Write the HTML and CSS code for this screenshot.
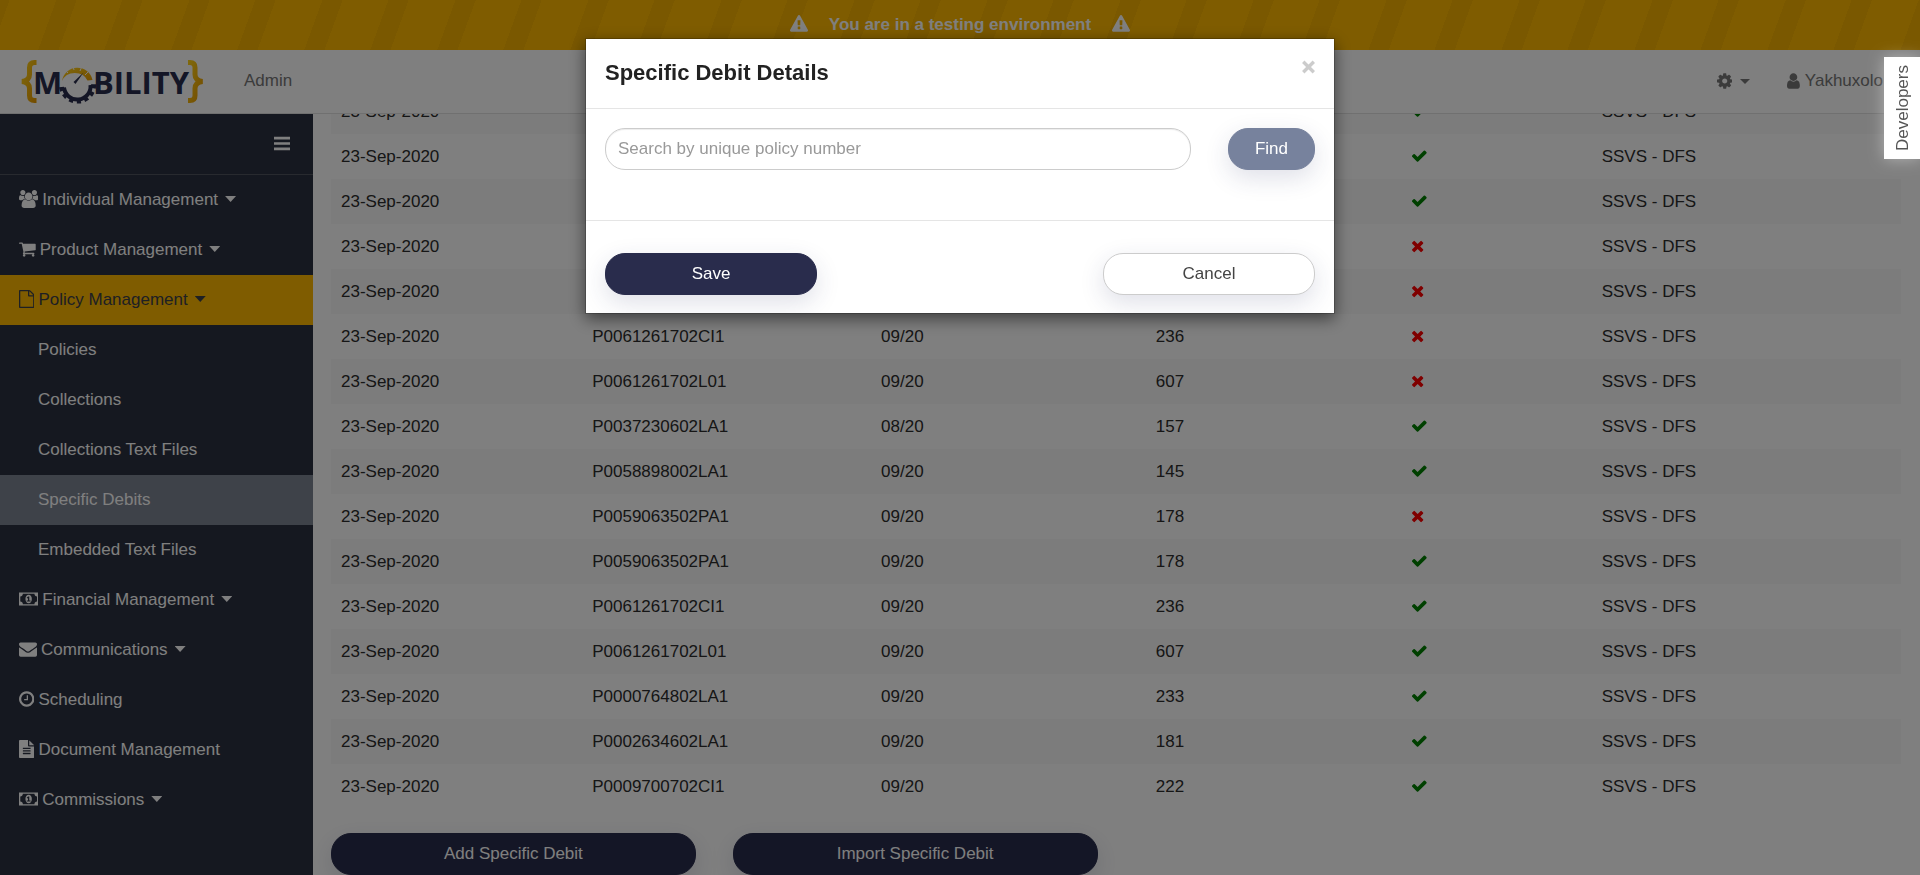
FILE: index.html
```html
<!DOCTYPE html>
<html lang="en">
<head>
<meta charset="utf-8">
<title>Mobility - Specific Debits</title>
<link rel="stylesheet" href="styles.css">
</head>
<body>
<svg class="sprite" aria-hidden="true">
  <symbol id="check" viewBox="0 0 1792 1792"><path d="M1671 566q0 40-28 68l-724 724-136 136q-28 28-68 28t-68-28l-136-136-362-362q-28-28-28-68t28-68l136-136q28-28 68-28t68 28l294 295 656-657q28-28 68-28t68 28l136 136q28 28 28 68z"/></symbol>
  <symbol id="times" viewBox="192 0 1408 1792"><path d="M1490 1322q0 40-28 68l-136 136q-28 28-68 28t-68-28l-294-294-294 294q-28 28-68 28t-68-28l-136-136q-28-28-28-68t28-68l294-294-294-294q-28-28-28-68t28-68l136-136q28-28 68-28t68 28l294 294 294-294q28-28 68-28t68 28l136 136q28 28 28 68t-28 68l-294 294 294 294q28 28 28 68z"/></symbol>
  <symbol id="warning" viewBox="0 0 1792 1792"><path d="M1024 1375v-190q0-14-9.500-23.500t-22.500-9.500h-192q-13 0-22.500 9.500t-9.500 23.500v190q0 14 9.500 23.500t22.500 9.500h192q13 0 22.500-9.500t9.500-23.500zm-2-374l18-459q0-12-10-19-13-11-24-11h-220q-11 0-24 11-10 7-10 21l17 457q0 10 10 16.500t24 6.500h185q14 0 23.500-6.500t10.500-16.500zm-14-934l768 1408q35 63-2 126-17 29-46.500 46t-63.500 17h-1536q-34 0-63.500-17t-46.500-46q-37-63-2-126l768-1408q17-31 47-49t65-18 65 18 47 49z"/></symbol>
</svg>

<div class="shell">
  <div class="banner">
    <svg class="icon" viewBox="0 0 1792 1792"><use href="#warning"/></svg>
    <span>You are in a testing environment</span>
    <svg class="icon" viewBox="0 0 1792 1792"><use href="#warning"/></svg>
  </div>

  <header class="navbar">
    <a class="logo" href="#" aria-label="Mobility">
      <svg viewBox="20 58 186 50" width="186" height="50">
        <defs>
          <linearGradient id="gold" x1="0" y1="0" x2="1" y2="1"><stop offset="0" stop-color="#ffd21a"/><stop offset="1" stop-color="#e89a00"/></linearGradient>
        </defs>
        <g fill="none" stroke="url(#gold)" stroke-width="5">
          <path d="M36.500 63.500h-2q-5 0-5 5v7q0 6-7.500 7q7.500 1 7.500 7v7q0 5 5 5h2"/>
          <path d="M188 63.500h2q5 0 5 5v7q0 6 7.500 7q-7.500 1-7.500 7v7q0 5-5 5h-2"/>
        </g>
        <g class="logo-text"><text x="33" y="95">M</text><text x="93" y="95">BILITY</text></g>
        <path fill="url(#gold)" d="M62 82A15.500 15.500 0 0 1 92.500 81L87.500 81.500A14 13 0 0 0 62 82z"/>
        <path stroke="#fff" stroke-width="1" d="M68 74l-3-3M74 71l-1-4M80 72l2-5M85 76l4-4"/>
        <path fill="none" stroke="#292c4c" stroke-width="4" d="M64 88.500A13 13 0 0 0 90.500 86"/>
        <path fill="none" stroke="#292c4c" stroke-width="5" stroke-dasharray="4 3.500" d="M61.500 88A16 16 0 0 0 93.500 84"/>
        <path fill="#292c4c" d="M73.500 83L83.500 73.500L75.500 85z"/>
      </svg>
    </a>
    <a class="nav-link" href="#">Admin</a>
    <div class="nav-right">
      <a class="nav-link gear-link" href="#" aria-label="Settings">
        <svg class="icon" viewBox="128 0 1536 1792"><path d="M1152 896q0-106-75-181t-181-75-181 75-75 181 75 181 181 75 181-75 75-181zm512-109v222q0 12-8 23t-20 13l-185 28q-19 54-39 91 35 50 107 138 10 12 10 25t-9 23q-27 37-99 108t-94 71q-12 0-26-9l-138-108q-44 23-91 38-16 136-29 186-7 28-36 28h-222q-14 0-24.500-8.500t-11.500-21.500l-28-184q-49-16-90-37l-141 107q-10 9-25 9-14 0-25-11-126-114-165-168-7-10-7-23 0-12 8-23 15-21 51-66.500t54-70.500q-27-50-41-99l-183-27q-13-2-21-12.500t-8-23.500v-222q0-12 8-23t19-13l186-28q14-46 39-92-40-57-107-138-10-12-10-24 0-10 9-23 26-36 98.500-107.500t94.500-71.500q13 0 26 10l138 107q44-23 91-38 16-136 29-186 7-28 36-28h222q14 0 24.500 8.500t11.500 21.500l28 184q49 16 90 37l142-107q9-9 24-9 13 0 25 10 129 119 165 170 7 8 7 22 0 12-8 23-15 21-51 66.500t-54 70.500q26 50 41 98l183 28q13 2 21 12.500t8 23.500z"/></svg>
        <span class="caret"></span>
      </a>
      <a class="nav-link" href="#">
        <svg class="icon" viewBox="256 0 1280 1792"><path d="M1536 1399q0 109-62.500 187t-150.500 78h-854q-88 0-150.500-78t-62.500-187q0-85 8.500-160.500t31.500-152 58.500-131 94-89 134.500-34.500q131 128 313 128t313-128q76 0 134.500 34.500t94 89 58.500 131 31.500 152 8.500 160.500zm-256-887q0 159-112.500 271.500t-271.500 112.500-271.500-112.500-112.500-271.500 112.500-271.500 271.500-112.500 271.500 112.500 112.500 271.500z"/></svg>
        Yakhuxolo
      </a>
    </div>
  </header>

  <div class="body">
    <nav class="sidebar">
      <div class="sidebar-top">
        <button class="toggle" type="button" aria-label="Toggle menu"><svg class="icon" viewBox="128 0 1536 1792"><path d="M128 256h1536v256H128zM128 768h1536v256H128zM128 1280h1536v256H128z"/></svg></button>
      </div>
      <ul class="menu">
        <li><a href="#"><svg class="icon" viewBox="0 0 1920 1792"><path d="M593 896q-162 5-265 128H194q-82 0-138-40.500T0 865q0-353 124-353 6 0 43.500 21t97.500 42.500T384 597q67 0 133-23-5 37-5 66 0 139 81 256zM1664 1533q0 120-73 189.500t-194 69.500H523q-121 0-194-69.500T256 1533q0-300 110-450t250-150q10 0 43 21.500t73 48 107 48 121 21.500 121-21.500 107-48 73-48 43-21.500q140 0 250 150t110 450zM640 256q0 106-75 181t-181 75-181-75-75-181 75-181T384 0t181 75 75 181zM1344 640q0 159-112.500 271.500T960 1024 688.500 911.500 576 640t112.500-271.500T960 256t271.500 112.500T1344 640zM1920 865q0 78-56 118.500t-138 40.500h-134q-103-123-265-128 81-117 81-256 0-29-5-66 66 23 133 23 59 0 119-21.500t97.500-42.500 43.500-21q124 0 124 353zM1792 256q0 106-75 181t-181 75-181-75-75-181 75-181 181-75 181 75 75 181z"/></svg>Individual Management<span class="caret wide"></span></a></li>
        <li><a href="#"><svg class="icon" viewBox="64 0 1664 1792"><path d="M704 1536q0 52-38 90t-90 38-90-38-38-90 38-90 90-38 90 38 38 90zm896 0q0 52-38 90t-90 38-90-38-38-90 38-90 90-38 90 38 38 90zm128-1088v512q0 24-16.500 42.500t-40.500 21.500l-1044 122q13 60 13 70 0 16-24 64h920q26 0 45 19t19 45-19 45-45 19h-1024q-26 0-45-19t-19-45q0-11 8-31.500t16-36 21.500-40 15.500-29.500l-177-823h-204q-26 0-45-19t-19-45 19-45 45-19h256q16 0 28.500 6.500t19.500 15.500 13 24.500 8 26 5.500 29.500 4.500 26h1201q26 0 45 19t19 45z"/></svg>Product Management<span class="caret wide"></span></a></li>
        <li><a class="open" href="#"><svg class="icon" viewBox="128 0 1536 1792"><path d="M1596 380q28 28 48 76t20 88v1152q0 40-28 68t-68 28h-1344q-40 0-68-28t-28-68v-1600q0-40 28-68t68-28h896q40 0 88 20t76 48zm-444-244v376h376q-10-29-22-41l-313-313q-12-12-41-22zm384 1528v-1024h-416q-40 0-68-28t-28-68v-416h-768v1536h1280z"/></svg>Policy Management<span class="caret wide"></span></a>
          <ul class="submenu">
            <li><a href="#">Policies</a></li>
            <li><a href="#">Collections</a></li>
            <li><a href="#">Collections Text Files</a></li>
            <li><a class="current" href="#">Specific Debits</a></li>
            <li><a href="#">Embedded Text Files</a></li>
          </ul>
        </li>
        <li><a href="#"><svg class="icon" viewBox="0 0 1920 1792"><path id="money" fill-rule="evenodd" d="M0 256h1920v1280H0zM384 384q0 106-75 181t-181 75v512q106 0 181 75t75 181h1152q0-106 75-181t181-75V640q-106 0-181-75t-75-181zM960 480q150 0 235 125t85 291-85 291-235 125-235-125-85-291 85-291 235-125zM768 1152h384v-114h-128V640H910L762 777l77 80q48-42 55-55h2v236H768z"/></svg>Financial Management<span class="caret wide"></span></a></li>
        <li><a href="#"><svg class="icon" viewBox="0 0 1792 1792"><path d="M1792 710v794q0 66-47 113t-113 47h-1472q-66 0-113-47t-47-113v-794q44 49 101 87 362 246 497 345 57 42 92.500 65.500t94.500 48 110 24.500h2q51 0 110-24.500t94.500-48 92.500-65.500q170-123 498-345 57-39 100-87zm0-294q0 79-49 151t-122 123q-376 261-468 325-10 7-42.500 31t-54 38.500-52 32.500-57.500 27-50 9h-2q-23 0-50-9t-57.500-27-52-32.500-54-38.500-42.500-31q-91-64-262-182.500t-205-142.500q-62-42-117-115.500t-55-136.500q0-78 41.500-130t118.500-52h1472q65 0 112.500 47t47.500 113z"/></svg>Communications<span class="caret wide"></span></a></li>
        <li><a href="#"><svg class="icon" viewBox="128 0 1536 1792"><path d="M1024 544v448q0 14-9 23t-23 9h-320q-14 0-23-9t-9-23v-64q0-14 9-23t23-9h224v-352q0-14 9-23t23-9h64q14 0 23 9t9 23zm416 352q0-148-73-273t-198-198-273-73-273 73-198 198-73 273 73 273 198 198 273 73 273-73 198-198 73-273zm224 0q0 209-103 385.500t-279.500 279.500-385.500 103-385.500-103-279.500-279.500-103-385.500 103-385.500 279.500-279.500 385.500-103 385.500 103 279.500 279.500 103 385.500z"/></svg>Scheduling</a></li>
        <li><a href="#"><svg class="icon" viewBox="128 0 1536 1792"><path d="M1596 476q14 14 28 36h-472v-472q22 14 36 28zm-476 164h544v1056q0 40-28 68t-68 28h-1344q-40 0-68-28t-28-68v-1600q0-40 28-68t68-28h800v544q0 40 28 68t68 28zm160 736v-64q0-14-9-23t-23-9h-704q-14 0-23 9t-9 23v64q0 14 9 23t23 9h704q14 0 23-9t9-23zm0-256v-64q0-14-9-23t-23-9h-704q-14 0-23 9t-9 23v64q0 14 9 23t23 9h704q14 0 23-9t9-23zm0-256v-64q0-14-9-23t-23-9h-704q-14 0-23 9t-9 23v64q0 14 9 23t23 9h704q14 0 23-9t9-23z"/></svg>Document Management</a></li>
        <li><a href="#"><svg class="icon" viewBox="0 0 1920 1792"><use href="#money"/></svg>Commissions<span class="caret wide"></span></a></li>
      </ul>
    </nav>

    <main class="content">
      <table class="debits">
        <colgroup><col class="c-date"><col class="c-policy"><col class="c-period"><col class="c-amount"><col class="c-status"><col class="c-source"></colgroup>
        <tbody id="rows"></tbody>
      </table>
      <div class="actions">
        <button class="btn primary" type="button">Add Specific Debit</button>
        <button class="btn primary" type="button">Import Specific Debit</button>
      </div>
    </main>
  </div>
</div>

<div class="backdrop">
  <div class="modal" role="dialog" aria-labelledby="modal-title">
    <div class="modal-header">
      <h4 id="modal-title">Specific Debit Details</h4>
      <button class="close" type="button" aria-label="Close"><svg class="icon" viewBox="320 192 1152 1408"><path fill="none" stroke="currentColor" stroke-width="300" d="M430 430L1362 1362M1362 430L430 1362"/></svg></button>
    </div>
    <div class="modal-body">
      <input class="search" type="text" aria-label="Policy number" placeholder="Search by unique policy number">
      <button class="btn find" type="button">Find</button>
    </div>
    <div class="modal-footer">
      <button class="btn primary" type="button">Save</button>
      <button class="btn plain" type="button">Cancel</button>
    </div>
  </div>
</div>

<a class="dev-tab" href="#">Developers</a>
<script src="rows.js"></script>
</body>
</html>
```

FILE: styles.css
```css
* {
  box-sizing: border-box;
}

body {
  margin: 0;
  font-family: "Liberation Sans", Arial, sans-serif;
  font-size: 17px;
  line-height: 25px;
  color: #2c2c2c;
  background: #fff;
}

a {
  color: inherit;
  text-decoration: none;
}

button,
input {
  font: inherit;
}

.sprite {
  display: none;
}

.icon {
  height: 18px;
  flex: none;
  fill: currentColor;
}

.shell {
  display: flex;
  flex-direction: column;
  height: 100vh;
  overflow: hidden;
}

/* Striped environment warning */
.banner {
  flex: none;
  display: flex;
  justify-content: center;
  align-items: center;
  gap: 21px;
  height: 50px;
  padding-bottom: 2px;
  font-weight: bold;
  color: #fff;
  background: repeating-linear-gradient(110deg, #f4b000 0 9px, #ffb900 9px 53px, #f4b000 53px 72px, #ffb900 72px 115px, #f4b000 115px 125px);
}

.navbar {
  flex: none;
  display: flex;
  align-items: center;
  height: 64px;
  padding-left: 20px;
  color: #777;
  background: #fefefe;
  border-bottom: 1px solid #e0e0e0;
}

.logo svg {
  display: block;
}

.logo-text {
  font-family: "Open Sans", "Noto Sans", sans-serif;
  font-size: 31px;
  font-weight: bold;
  fill: #292c4c;
}

.navbar > .nav-link {
  margin-left: 38px;
}

.nav-right {
  display: flex;
  gap: 37px;
  margin-left: auto;
  padding-right: 37px;
}

.nav-link {
  display: flex;
  align-items: center;
  gap: 5px;
  padding-bottom: 2px;
}

.gear-link {
  gap: 8px;
}

.caret {
  width: 10px;
  height: 5px;
  margin-top: 2px;
  background: currentColor;
  clip-path: polygon(0 0, 100% 0, 50% 100%);
}

.caret.wide {
  width: 11px;
  height: 6px;
  margin-top: 0;
}

.body {
  flex: 1;
  display: flex;
  min-height: 0;
}

.sidebar {
  flex: none;
  width: 313px;
  color: #fff;
  background: #2b3040;
}

.sidebar-top {
  display: flex;
  justify-content: flex-end;
  align-items: center;
  height: 61px;
  padding: 0 23px 2px 0;
  border-bottom: 1px solid #50545f;
}

.toggle {
  display: flex;
  padding: 0;
  color: inherit;
  background: none;
  border: 0;
}

.toggle .icon {
  height: 19px;
}

.menu,
.submenu {
  margin: 0;
  padding: 0;
  list-style: none;
}

.menu a {
  display: flex;
  align-items: center;
  gap: 4px;
  height: 50px;
  padding: 0 0 2px 19px;
}

.menu .caret {
  margin-left: 3px;
}

.menu .open {
  color: #3c4048;
  background: #ffb900;
}

.menu .submenu a {
  padding-left: 38px;
}

.menu .current {
  background: #7c8492;
}

/* The list is scrolled to its end */
.content {
  flex: 1;
  display: flex;
  flex-direction: column;
  justify-content: flex-end;
  gap: 24px;
  min-width: 0;
  padding: 0 19px 0 18px;
  overflow: hidden;
}

.debits {
  width: 100%;
  table-layout: fixed;
  border-collapse: collapse;
}

.debits td {
  height: 45px;
  padding: 0 10px;
}

.debits tr:nth-child(odd) {
  background: #f8f8f8;
}

.debits .icon {
  display: block;
  height: 17px;
}

.c-date { width: 16%; }
.c-policy { width: 18.4%; }
.c-period { width: 17.5%; }
.c-amount { width: 16.3%; }
.c-status { width: 12.1%; }
.c-source { width: 19.7%; }

.ok { color: #008000; }
.failed { color: #f00; }

.actions {
  display: grid;
  grid-template-columns: repeat(4, 1fr);
  gap: 37px;
}

.btn {
  height: 42px;
  padding: 0 20px 2px;
  border: 1px solid transparent;
  border-radius: 20px;
  box-shadow: 0 8px 24px rgba(41, 44, 100, 0.15);
}

.primary {
  color: #fff;
  background: #292c4c;
  border-color: #292c4c;
}

.find {
  width: 87px;
  color: #fff;
  background: #77829d;
  border-color: #77829d;
}

.plain {
  color: #444;
  background: #fff;
  border-color: #ccc;
}

.backdrop {
  position: fixed;
  inset: 0;
  display: flex;
  justify-content: center;
  align-items: flex-start;
  padding-top: 38px;
  background: rgba(0, 0, 0, 0.5);
}

.modal {
  width: 750px;
  background: #fff;
  background-clip: padding-box;
  border: 1px solid rgba(0, 0, 0, 0.2);
  box-shadow: 0 5px 15px rgba(0, 0, 0, 0.5);
}

.modal-header {
  display: flex;
  justify-content: space-between;
  align-items: flex-start;
  padding: 20px 19px 22px;
  border-bottom: 1px solid #e5e5e5;
}

.modal-header h4 {
  margin: 0;
  font-size: 22px;
  line-height: 27px;
  color: #222;
}

.close {
  display: flex;
  padding: 0;
  color: #ccc;
  background: none;
  border: 0;
}

.close .icon {
  height: 16px;
}

.modal-body {
  display: flex;
  gap: 37px;
  padding: 19px 19px 50px;
  border-bottom: 1px solid #e5e5e5;
}

.search {
  flex: 1;
  height: 42px;
  padding: 0 12px;
  background: #fff;
  border: 1px solid #ccc;
  border-radius: 20px;
  box-shadow: inset 0 1px 1px rgba(0, 0, 0, 0.075);
}

.search::placeholder {
  color: #999;
}

.modal-footer {
  display: flex;
  justify-content: space-between;
  padding: 32px 19px 18px;
}

.modal-footer .btn {
  width: 212px;
}

.dev-tab {
  position: fixed;
  top: 57px;
  right: 0;
  padding: 8px 6px 8px 5px;
  writing-mode: vertical-rl;
  rotate: 180deg;
  color: #555;
  background: #fff;
  box-shadow: 0 0 15px rgba(255, 255, 255, 0.4);
}
```

FILE: rows.js
```js
const debits = [
  ["P0009700702CI1", "09/20", 222, true],
  ["P0000764802LA1", "09/20", 233, true],
  ["P0002634602LA1", "09/20", 181, true],
  ["P0059063502PA1", "09/20", 178, false],
  ["P0058898002LA1", "09/20", 145, false],
  ["P0061261702CI1", "09/20", 236, false],
  ["P0061261702L01", "09/20", 607, false],
  ["P0037230602LA1", "08/20", 157, true],
  ["P0058898002LA1", "09/20", 145, true],
  ["P0059063502PA1", "09/20", 178, false],
  ["P0059063502PA1", "09/20", 178, true],
  ["P0061261702CI1", "09/20", 236, true],
  ["P0061261702L01", "09/20", 607, true],
  ["P0000764802LA1", "09/20", 233, true],
  ["P0002634602LA1", "09/20", 181, true],
  ["P0009700702CI1", "09/20", 222, true]
];

const check = '<svg class="icon ok" viewBox="128 64 1664 1792"><use href="#check" width="1792" height="1792"/></svg>';
const cross = '<svg class="icon failed" viewBox="300 64 1408 1792"><use href="#times" x="192" width="1408" height="1792"/></svg>';

document.getElementById("rows").innerHTML = debits
  .map(([policy, period, amount, ok]) =>
    `<tr><td>23-Sep-2020</td><td>${policy}</td><td>${period}</td><td>${amount}</td><td>${ok ? check : cross}</td><td>SSVS - DFS</td></tr>`)
  .join("");
```
